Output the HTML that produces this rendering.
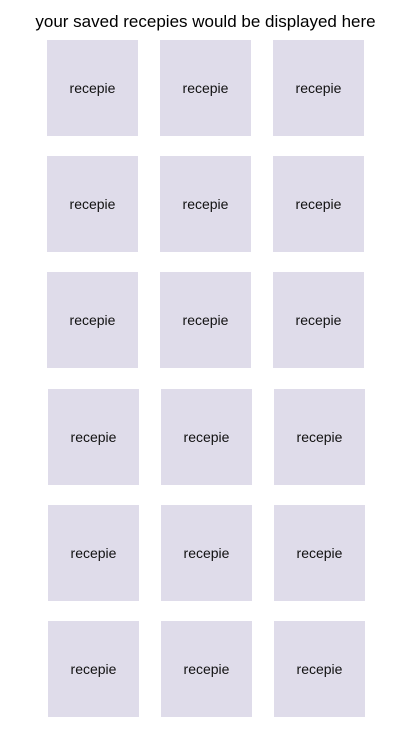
<!DOCTYPE html>
<html><head><meta charset="utf-8"><style>
html,body{margin:0;padding:0;background:#fff;width:414px;height:736px;overflow:hidden;position:relative;font-family:"Liberation Sans",Helvetica,Arial,sans-serif}
h1{position:absolute;top:11px;left:0;width:411px;text-align:center;margin:0;font-weight:normal;font-size:17px;color:#000;line-height:22px}
.b{position:absolute;width:91px;height:96px;background:#dfdcea;display:flex;align-items:center;justify-content:center;font-size:14px;color:#111}
</style></head><body>
<h1>your saved recepies would be displayed here</h1>
<div class="b" style="left:47px;top:40px">recepie</div>
<div class="b" style="left:160px;top:40px">recepie</div>
<div class="b" style="left:273px;top:40px">recepie</div>
<div class="b" style="left:47px;top:156px">recepie</div>
<div class="b" style="left:160px;top:156px">recepie</div>
<div class="b" style="left:273px;top:156px">recepie</div>
<div class="b" style="left:47px;top:272px">recepie</div>
<div class="b" style="left:160px;top:272px">recepie</div>
<div class="b" style="left:273px;top:272px">recepie</div>
<div class="b" style="left:48px;top:389px">recepie</div>
<div class="b" style="left:161px;top:389px">recepie</div>
<div class="b" style="left:274px;top:389px">recepie</div>
<div class="b" style="left:48px;top:505px">recepie</div>
<div class="b" style="left:161px;top:505px">recepie</div>
<div class="b" style="left:274px;top:505px">recepie</div>
<div class="b" style="left:48px;top:621px">recepie</div>
<div class="b" style="left:161px;top:621px">recepie</div>
<div class="b" style="left:274px;top:621px">recepie</div>
</body></html>
